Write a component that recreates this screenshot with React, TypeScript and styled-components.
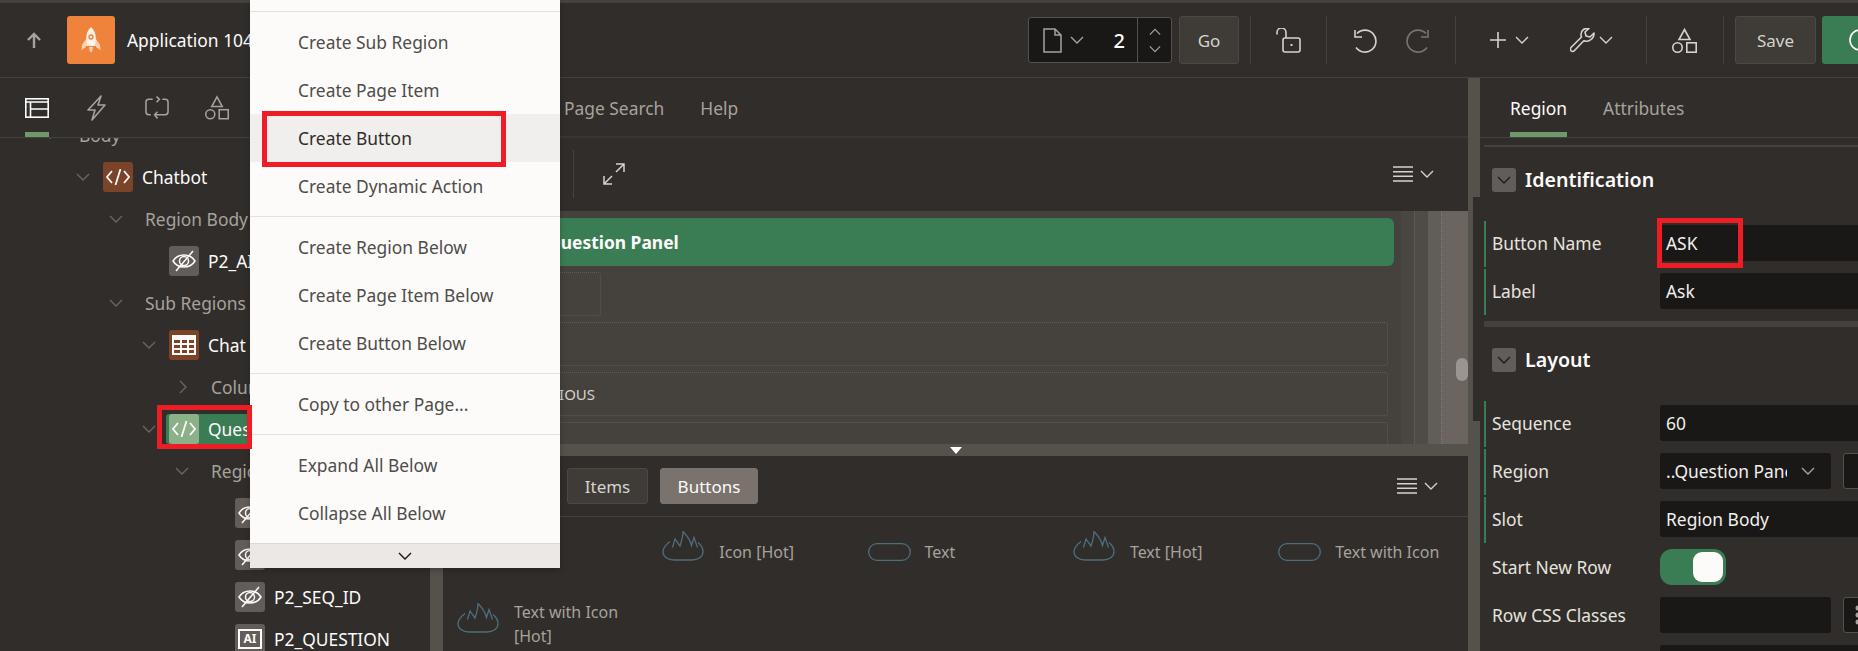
import React from "react";
import styled, { createGlobalStyle } from "styled-components";

const GlobalStyle = createGlobalStyle`
  html, body {
    margin: 0;
    padding: 0;
    background: #312d2a;
  }
  * {
    box-sizing: border-box;
  }
`;

const Page = styled.div`
  position: relative;
  width: 1858px;
  height: 651px;
  overflow: hidden;
  background: #312d2a;
  color: #fcfbfa;
  font-family: "Noto Sans", "Open Sans", sans-serif;
  font-size: 17.4px;
`;

const TopStrip = styled.div`
  height: 3px;
  background: #45413c;
`;

/* header */
const Header = styled.header`
  height: 75px;
  display: flex;
  align-items: center;
  border-bottom: 1px solid #45413c;
`;

const AppBlock = styled.div`
  width: 1028px;
  flex: none;
  display: flex;
  align-items: center;
  padding-left: 25px;
`;

const UpButton = styled.span`
  width: 18px;
  height: 18px;
  margin-right: 24px;
  color: #a6a29c;
  display: flex;
`;

const AppIcon = styled.span`
  width: 48px;
  height: 48px;
  margin-right: 12px;
  border-radius: 3px;
  background: #ef833b;
  display: flex;
  align-items: center;
  justify-content: center;
`;

const AppTitle = styled.span`
  font-size: 17.4px;
  white-space: nowrap;
`;

const Tools = styled.div`
  display: flex;
  align-items: center;
  flex: none;
`;

const PageBox = styled.div`
  width: 144px;
  height: 46px;
  display: flex;
  align-items: center;
  background: #191817;
  border: 1px solid #55514b;
  border-radius: 3px;
`;

const PageType = styled.div`
  width: 108px;
  height: 100%;
  display: flex;
  align-items: center;
  padding-left: 14px;
  gap: 8px;
  color: #a6a29c;
`;

const PageNumber = styled.span`
  margin-left: auto;
  padding-right: 12px;
  font-size: 20px;
  font-weight: 500;
  color: #fff;
`;

const Stepper = styled.div`
  flex: 1;
  height: 100%;
  border-left: 1px solid #55514b;
  display: flex;
  flex-direction: column;
  align-items: center;
  justify-content: space-around;
  padding: 5px 0;
  color: #a6a29c;
`;

const HeaderButton = styled.button<{ $width: number }>`
  width: ${(p) => p.$width}px;
  height: 48px;
  flex: none;
  margin-left: ${(p) => (p.$width > 70 ? 11 : 7)}px;
  padding: 0;
  background: #3f3b37;
  border: 1px solid #4c4842;
  border-radius: 3px;
  color: #d6d2cd;
  font-family: inherit;
  font-size: 17px;
`;

const GreenButton = styled.div`
  width: 80px;
  height: 48px;
  flex: none;
  margin-left: 6px;
  padding-left: 26px;
  background: #3a7d55;
  border-radius: 3px 0 0 3px;
  display: flex;
  align-items: center;
`;

const ToolSep = styled.span<{ $left?: number }>`
  width: 1px;
  height: 48px;
  flex: none;
  background: #45413c;
  margin-left: ${(p) => p.$left ?? 0}px;
`;

const ToolGroup = styled.div<{ $width: number; $pad: number; $gap: number }>`
  width: ${(p) => p.$width}px;
  height: 48px;
  flex: none;
  display: flex;
  align-items: center;
  padding-left: ${(p) => p.$pad}px;
  gap: ${(p) => p.$gap}px;
  color: #d6d2cd;
`;

const ToolPair = styled.span<{ $gap: number }>`
  display: flex;
  align-items: center;
  gap: ${(p) => p.$gap}px;
`;

const Dim = styled.span`
  display: flex;
  color: #7a766f;
`;

/* main area */
const Workspace = styled.div`
  height: 573px;
  display: flex;
`;

const LeftPane = styled.div`
  width: 430px;
  flex: none;
  display: flex;
  flex-direction: column;
  overflow: hidden;
`;

const PaneTabs = styled.div`
  height: 60px;
  flex: none;
  display: flex;
  align-items: center;
  gap: 36px;
  padding-left: 25px;
  color: #a6a29c;
  border-bottom: 1px solid #45413c;
`;

const PaneTab = styled.span<{ $active?: boolean }>`
  position: relative;
  width: 24px;
  height: 24px;
  display: flex;
  align-items: center;
  justify-content: center;
  color: ${(p) => (p.$active ? "#fff" : "#a6a29c")};

  &::after {
    content: "";
    display: ${(p) => (p.$active ? "block" : "none")};
    position: absolute;
    left: 0;
    right: 0;
    top: 36px;
    height: 5px;
    background: #6e9a6b;
  }
`;

const Tree = styled.div`
  flex: 1;
  overflow: hidden;
`;

const TreeList = styled.div`
  margin-top: -24px;
`;

const TreeRow = styled.div<{ $left: number }>`
  position: relative;
  height: 42px;
  display: flex;
  align-items: center;
  padding-left: ${(p) => p.$left}px;
`;

const Caret = styled.span<{ $gap: number }>`
  width: 16px;
  flex: none;
  margin-right: ${(p) => p.$gap}px;
  display: flex;
  justify-content: center;
  color: #6b6760;
`;

const TreeNode = styled.div<{ $selected?: boolean }>`
  flex: 1;
  height: 30px;
  display: flex;
  align-items: center;
  gap: 9px;
  white-space: nowrap;
  ${(p) =>
    p.$selected &&
    `
    margin-left: -3px;
    padding-left: 3px;
    background: #3a7d55;
    border-radius: 3px 0 0 3px;
  `}
`;

const NodeIcon = styled.span<{ $tone: "brown" | "grey" | "light" }>`
  width: 30px;
  height: 30px;
  flex: none;
  border-radius: 3px;
  display: flex;
  align-items: center;
  justify-content: center;
  color: #fcfbfa;
  background: ${(p) =>
    p.$tone === "brown" ? "#7b4428" : p.$tone === "light" ? "#8cb088" : "#625d58"};
`;

const NodeText = styled.span<{ $dim?: boolean }>`
  font-size: 17.4px;
  color: ${(p) => (p.$dim ? "#a6a29c" : "#fcfbfa")};
  white-space: nowrap;
`;

const AiBadge = styled.span`
  width: 24px;
  height: 20px;
  border: 2px solid #fcfbfa;
  font-size: 12px;
  font-weight: 700;
  line-height: 16px;
  text-align: center;
`;

const Splitter = styled.div<{ $width: number }>`
  width: ${(p) => p.$width}px;
  flex: none;
  background: #55514b;
`;

const CenterPane = styled.div`
  flex: 1;
  min-width: 0;
  display: flex;
  flex-direction: column;
`;

const CenterTabs = styled.div`
  height: 60px;
  flex: none;
  display: flex;
  align-items: center;
  padding: 1px 0 0 121px;
  gap: 36px;
  color: #a6a29c;
  border-bottom: 2px solid #3a3733;
`;

const TextTab = styled.span<{ $active?: boolean }>`
  position: relative;
  color: ${(p) => (p.$active ? "#fcfbfa" : "#a6a29c")};
  font-size: 17.4px;
  white-space: nowrap;
`;

const CanvasBar = styled.div`
  height: 73px;
  flex: none;
  display: flex;
  align-items: center;
  padding: 0 0 2px 130px;
  color: #d6d2cd;
`;

const BarSep = styled.span`
  width: 1px;
  height: 48px;
  background: #45413c;
  margin-right: 29px;
`;

const RowMenu = styled.span<{ $right: number }>`
  margin-left: auto;
  margin-right: ${(p) => p.$right}px;
  display: flex;
  align-items: center;
  gap: 7px;
`;

const Canvas = styled.div`
  height: 233px;
  flex: none;
  display: flex;
  overflow: hidden;
`;

const CanvasMain = styled.div`
  flex: 1;
  min-width: 0;
  background: #45413c;
  padding: 7px 7px 0 8px;
`;

const RegionTitle = styled.div`
  height: 48px;
  padding-left: 96px;
  display: flex;
  align-items: center;
  background: #3a7d55;
  border-radius: 6px;
  font-size: 17.4px;
  font-weight: 700;
`;

const Slot = styled.div<{ $width?: number }>`
  width: ${(p) => (p.$width ? `${p.$width}px` : "auto")};
  height: 44px;
  margin: 6px 6px 6px 0;
  padding-left: 47px;
  display: flex;
  align-items: center;
  color: #d6d2cd;
  font-size: 15px;
  border: 1px dotted #5f5b55;
  border-radius: 3px;
`;

const Gutter = styled.div<{ $width: number; $color: string; $line?: string }>`
  width: ${(p) => p.$width}px;
  flex: none;
  background: ${(p) => p.$color};
  border-right: ${(p) => (p.$line ? `1px ${p.$line}` : "none")};
`;

const ScrollTrack = styled.div`
  width: 26px;
  flex: none;
  display: flex;
  justify-content: flex-end;
  background: #6c655f;
`;

const ScrollThumb = styled.div`
  width: 12px;
  height: 23px;
  margin-top: 147px;
  background: #9a9590;
  border-radius: 6px;
`;

const HSplit = styled.div`
  height: 12px;
  flex: none;
  background: #55514b;
  display: flex;
  justify-content: center;
  align-items: center;
`;

const SplitArrow = styled.span`
  width: 0;
  height: 0;
  border-left: 6px solid transparent;
  border-right: 6px solid transparent;
  border-top: 7px solid #fff;
`;

const GalleryBar = styled.div`
  height: 61px;
  flex: none;
  display: flex;
  align-items: center;
  padding-left: 124px;
  gap: 12px;
  border-bottom: 1px solid #45413c;
  color: #d6d2cd;
`;

const ModeButton = styled.span<{ $active?: boolean; $width: number }>`
  width: ${(p) => p.$width}px;
  height: 36px;
  display: flex;
  align-items: center;
  justify-content: center;
  border-radius: 3px;
  font-size: 17px;
  color: ${(p) => (p.$active ? "#fcfbfa" : "#d6d2cd")};
  background: ${(p) => (p.$active ? "#7a736d" : "#3f3b37")};
  border: 1px solid ${(p) => (p.$active ? "#7a736d" : "#4c4842")};
`;

const Gallery = styled.div`
  display: grid;
  grid-template-columns: repeat(5, 205.3px);
  grid-auto-rows: 48px;
  row-gap: 24px;
  padding: 11px 0 0 14px;
`;

const GalleryItem = styled.div`
  display: flex;
  align-items: center;
  gap: 14px;
  color: #a6a29c;
  font-size: 16px;
  line-height: 24px;
`;

const GalleryLabel = styled.span`
  max-width: 125px;
`;

const GalleryGlyph = styled.span<{ $hot: boolean }>`
  width: 43px;
  flex: none;
  margin-bottom: ${(p) => (p.$hot ? 12 : 0)}px;
  display: flex;
  color: #4d6e7d;
`;

/* property editor */
const RightPane = styled.div`
  position: relative;
  width: 378px;
  flex: none;
`;

const Notch = styled.div`
  position: absolute;
  left: -7px;
  top: 119px;
  width: 11px;
  height: 224px;
  background: #312d2a;
`;

const RightTabs = styled.div`
  height: 60px;
  display: flex;
  align-items: center;
  gap: 36px;
  padding: 1px 0 0 30px;
  border-bottom: 1px solid #45413c;
`;

const TabMark = styled.span`
  position: absolute;
  left: 0;
  right: 0;
  top: 36px;
  height: 5px;
  background: #6e9a6b;
`;

const PropPanel = styled.div`
  overflow: hidden;
  height: 513px;
  padding-top: 7px;
  padding-left: 4px;
`;

const SectionBar = styled.div<{ $height: number; $top?: number }>`
  height: ${(p) => p.$height}px;
  margin-top: ${(p) => p.$top ?? 0}px;
  background: #45413c;
`;

const SectionHead = styled.div`
  height: 24px;
  margin: 21px 0 29px;
  padding-left: 8px;
  display: flex;
  align-items: center;
  gap: 9px;
  font-size: 19.6px;
  font-weight: 600;
`;

const SectionTitle = styled.span`
  margin-top: -2px;
`;

const SectionToggle = styled.span`
  width: 24px;
  height: 24px;
  border-radius: 3px;
  background: #625d58;
  display: flex;
  align-items: center;
  justify-content: center;
  color: #1e1c1a;
`;

const PropRow = styled.div<{ $marked?: boolean }>`
  height: 46px;
  margin-bottom: 2px;
  display: flex;
  align-items: center;
  padding: 0 0 2px 6px;
  border-left: 2px solid ${(p) => (p.$marked ? "#3a7d55" : "transparent")};
`;

const PropLabel = styled.span`
  width: 168px;
  flex: none;
  color: #e6e3df;
  font-size: 17.4px;
  white-space: nowrap;
`;

const Field = styled.div<{ $short?: boolean }>`
  position: relative;
  width: ${(p) => (p.$short ? 171 : 220)}px;
  height: 36px;
  flex: none;
  display: flex;
  align-items: center;
  padding-left: 6px;
  background: #191817;
  border-radius: 3px;
  font-size: 17.4px;
  color: #f1efed;
`;

const FieldText = styled.span`
  width: 121px;
  overflow: hidden;
  white-space: nowrap;
`;

const FieldCaret = styled.span`
  margin-left: 14px;
  display: flex;
  color: #a6a29c;
`;

const SideBox = styled.div`
  width: 40px;
  height: 36px;
  flex: none;
  margin-left: 12px;
  padding-left: 9px;
  display: flex;
  align-items: center;
  background: #191817;
  border: 1px solid #55514b;
  border-radius: 3px;
  color: #a6a29c;
`;

const Toggle = styled.div`
  width: 66px;
  height: 36px;
  padding: 3px;
  display: flex;
  justify-content: flex-end;
  background: #3a7d55;
  border-radius: 12px;
`;

const ToggleKnob = styled.span`
  width: 30px;
  height: 30px;
  background: #fcfbfa;
  border-radius: 9px;
`;

/* context menu */
const Menu = styled.div`
  position: absolute;
  left: 250px;
  top: 0;
  width: 310px;
  height: 568px;
  z-index: 10;
  padding-top: 11px;
  background: #fcfbfa;
  box-shadow: 0 2px 6px rgba(0, 0, 0, 0.25);
  color: #4f4c49;
  display: flex;
  flex-direction: column;
`;

const MenuGroup = styled.div`
  padding: 6px 0;
  border-top: 1px solid #e4e1de;
`;

const MenuItem = styled.div<{ $hot?: boolean }>`
  position: relative;
  height: 48px;
  display: flex;
  align-items: center;
  padding-left: 48px;
  font-size: 17.4px;
  color: ${(p) => (p.$hot ? "#312d2a" : "#4f4c49")};
  background: ${(p) => (p.$hot ? "#f1efed" : "transparent")};
`;

const MenuScroll = styled.div`
  height: 25px;
  margin-top: auto;
  display: flex;
  align-items: center;
  justify-content: center;
  background: #ebe8e5;
  border-top: 1px solid #dcd9d5;
  color: #161513;
`;

const RedBox = styled.div<{ $left: number; $top: number; $width: number; $height: number }>`
  position: absolute;
  left: ${(p) => p.$left}px;
  top: ${(p) => p.$top}px;
  width: ${(p) => p.$width}px;
  height: ${(p) => p.$height}px;
  border: 5px solid #ee1c25;
  z-index: 20;
  pointer-events: none;
`;

/* drawings */
type SvgProps = { size?: number };

const Chevron = ({ size = 14, dir = "down" }: SvgProps & { dir?: "down" | "up" | "right" }) => {
  const d = dir === "down" ? "M1 4l6 6 6-6" : dir === "up" ? "M1 10l6-6 6 6" : "M4 1l6 6-6 6";
  return (
    <svg width={size} height={size} viewBox="0 0 14 14" fill="none" stroke="currentColor" strokeWidth="1.4">
      <path d={d} />
    </svg>
  );
};

const ArrowUp = () => (
  <svg width="18" height="18" viewBox="0 0 18 18" fill="none" stroke="currentColor" strokeWidth="2.4">
    <path d="M9 17V3M3 9l6-6 6 6" />
  </svg>
);

const Rocket = () => (
  <svg width="20" height="26" viewBox="0 0 20 26">
    <path d="M10 0c3.400 3 4.800 7 4.800 11v8H5.200v-8C5.200 7 6.600 3 10 0z" fill="#fdf3ea" />
    <path d="M5 12L1 18l-.5 5L5 20zM15 12l4 6 .5 5-4.500-3z" fill="#f8cfae" />
    <path d="M8 20h4l-1 5H9z" fill="#f8cfae" />
    <circle cx="10" cy="10" r="2" fill="none" stroke="#ef833b" strokeWidth="1.400" />
  </svg>
);

const LayoutIcon = () => (
  <svg width="24" height="20" viewBox="0 0 24 20" fill="none" stroke="currentColor" strokeWidth="1.6">
    <rect x="0.8" y="0.8" width="22.400" height="18.400" />
    <path d="M1 4h22M5.500 4v15M5.500 11H23" />
  </svg>
);

const BoltIcon = () => (
  <svg width="20" height="26" viewBox="0 0 20 26" fill="none" stroke="currentColor" strokeWidth="1.600" strokeLinejoin="round">
    <path d="M14 1L1 15h7l-3 10 13-15h-7z" />
  </svg>
);

const LoopIcon = () => (
  <svg width="25" height="25" viewBox="0 0 25 25" fill="none" stroke="currentColor" strokeWidth="1.600">
    <path d="M8 4H4a3 3 0 0 0-3 3v10a3 3 0 0 0 3 3h2M12 1l3 3-3 3M15 4h0M17 20h4a3 3 0 0 0 3-3V7a3 3 0 0 0-3-3h-3M13 24l-3-4 3-3M10 20h7" />
  </svg>
);

const ShapesIcon = () => (
  <svg width="25" height="25" viewBox="0 0 25 25" fill="none" stroke="currentColor" strokeWidth="1.600">
    <path d="M12.500 1.500l5.500 10H7z" />
    <circle cx="5.500" cy="19.500" r="4.700" />
    <rect x="14.800" y="14.800" width="9.400" height="9.400" />
  </svg>
);

const DocIcon = () => (
  <svg width="19" height="25" viewBox="0 0 19 25" fill="none" stroke="currentColor" strokeWidth="1.500">
    <path d="M1 1h11l6 6v17H1zM12 1v6h6" />
  </svg>
);

const LockIcon = () => (
  <svg width="25" height="25" viewBox="0 0 25 25" fill="none" stroke="currentColor" strokeWidth="1.600">
    <path d="M1 6.500V4.500a4.500 4.500 0 0 1 9 0V10" />
    <rect x="7" y="10" width="17" height="14" rx="2" />
    <path d="M15.500 16v2" strokeWidth="2" />
  </svg>
);

const UndoIcon = ({ flip }: { flip?: boolean }) => (
  <svg width="25" height="25" viewBox="0 0 25 25" fill="none" stroke="currentColor" strokeWidth="1.600" style={flip ? { transform: "scaleX(-1)" } : undefined}>
    <path d="M4 4.500a11 11 0 1 1-1 14M2 1v7h7" transform="translate(1 1)" />
  </svg>
);

const PlusIcon = () => (
  <svg width="16" height="16" viewBox="0 0 16 16" fill="none" stroke="currentColor" strokeWidth="1.600">
    <path d="M8 0v16M0 8h16" />
  </svg>
);

const WrenchIcon = () => (
  <svg width="25" height="25" viewBox="0 0 25 25" fill="none" stroke="currentColor" strokeWidth="1.600" strokeLinejoin="round">
    <path d="M24 5l-4 4-4-1-1-4 4-3.500c-4-.8-8 1.500-8 6 0 1 .2 2 .5 2.500L1 19.500c-1 1-.6 2.500 0 3.300.8.800 2.300 1.200 3.300 0l9.500-10c4 1.500 10.500-1.500 10.200-7.800z" />
  </svg>
);

const ListIcon = () => (
  <svg width="20" height="16" viewBox="0 0 20 16" fill="none" stroke="currentColor" strokeWidth="1.600">
    <path d="M0 1h20M0 5.700h20M0 10.300h20M0 15h20" />
  </svg>
);

const ExpandIcon = () => (
  <svg width="22" height="22" viewBox="0 0 22 22" fill="none" stroke="currentColor" strokeWidth="1.500">
    <path d="M13 1h8v8M21 1l-8 8M9 21H1v-8M1 21l8-8" />
  </svg>
);

const CodeIcon = () => (
  <svg width="24" height="16" viewBox="0 0 24 16" fill="none" stroke="currentColor" strokeWidth="1.800">
    <path d="M6 2L1 8l5 6M18 2l5 6-5 6M14.500 0l-5 16" />
  </svg>
);

const HiddenIcon = () => (
  <svg width="24" height="22" viewBox="0 0 24 22" fill="none" stroke="currentColor" strokeWidth="1.500">
    <path d="M1 11c5-8 17-8 22 0-5 8-17 8-22 0z" />
    <circle cx="12" cy="11" r="4.500" />
    <path d="M4 21L21 1" />
  </svg>
);

const TableIcon = () => (
  <svg width="24" height="20" viewBox="0 0 24 20">
    <rect width="24" height="20" fill="currentColor" />
    <path d="M2 5h6v3H2zM10 5h5v3h-5zM17 5h5v3h-5zM2 10h6v3H2zM10 10h5v3h-5zM17 10h5v3h-5zM2 15h6v3H2zM10 15h5v3h-5zM17 15h5v3h-5z" fill="#7b4428" />
  </svg>
);

const Flame = () => (
  <svg width="43" height="30" viewBox="0 0 43 30" fill="none" stroke="currentColor" strokeWidth="1.300">
    <path d="M12 29h18c6 0 11-3 11-8.500 0-3.500-2-6.500-5-9M12 29C6 29 1 26 1 20.500 1 17 3.500 14 8 10.500" />
    <path d="M10.500 16.500L13 8l5 7c1.500-4.500 3-9.500 3-14.500 3 3 7 8 8.500 14L32 6.500l3.500 10" />
  </svg>
);

const Pill = () => (
  <svg width="43" height="18" viewBox="0 0 43 18" fill="none" stroke="currentColor" strokeWidth="1.300">
    <rect x="0.700" y="0.700" width="41.600" height="16.600" rx="8.300" />
  </svg>
);

const DotGrid = () => (
  <svg width="10" height="20" viewBox="0 0 10 20" fill="currentColor">
    <circle cx="5" cy="3" r="2.500" />
    <circle cx="5" cy="10" r="2.500" />
    <circle cx="5" cy="17" r="2.500" />
  </svg>
);

const ActionLoop = () => (
  <svg width="24" height="24" viewBox="0 0 24 24" fill="none" stroke="#fcfbfa" strokeWidth="1.600">
    <circle cx="12" cy="12" r="10" />
  </svg>
);

type TreeEntry = {
  left: number;
  caret?: "down" | "right";
  gap?: number;
  icon?: "code" | "hidden" | "table" | "ai";
  text: string;
  dim?: boolean;
  selected?: boolean;
};

const treeEntries: TreeEntry[] = [
  { left: 42, caret: "down", gap: 21, text: "Body", dim: true },
  { left: 75, caret: "down", gap: 12, icon: "code", text: "Chatbot" },
  { left: 108, caret: "down", gap: 21, text: "Region Body", dim: true },
  { left: 169, icon: "hidden", text: "P2_AI_MODEL" },
  { left: 108, caret: "down", gap: 21, text: "Sub Regions", dim: true },
  { left: 141, caret: "down", gap: 12, icon: "table", text: "Chat History" },
  { left: 175, caret: "right", gap: 20, text: "Columns", dim: true },
  { left: 141, caret: "down", gap: 12, icon: "code", text: "Question Panel", selected: true },
  { left: 174, caret: "down", gap: 21, text: "Region Body", dim: true },
  { left: 235, icon: "hidden", text: "P2_CONV_ID" },
  { left: 235, icon: "hidden", text: "P2_PREVIOUS" },
  { left: 235, icon: "hidden", text: "P2_SEQ_ID" },
  { left: 235, icon: "ai", text: "P2_QUESTION" },
];

const nodeGlyph = (icon: TreeEntry["icon"]) => {
  if (icon === "code") return <CodeIcon />;
  if (icon === "hidden") return <HiddenIcon />;
  if (icon === "table") return <TableIcon />;
  return <AiBadge>AI</AiBadge>;
};

const menuGroups = [
  ["Create Sub Region", "Create Page Item", "Create Button", "Create Dynamic Action"],
  ["Create Region Below", "Create Page Item Below", "Create Button Below"],
  ["Copy to other Page..."],
  ["Expand All Below", "Collapse All Below"],
];

const galleryItems = [
  { glyph: "pill", label: "Icon" },
  { glyph: "flame", label: "Icon [Hot]" },
  { glyph: "pill", label: "Text" },
  { glyph: "flame", label: "Text [Hot]" },
  { glyph: "pill", label: "Text with Icon" },
  { glyph: "flame", label: "Text with Icon [Hot]" },
];

export default function App() {
  return (
    <Page>
      <GlobalStyle />
      <TopStrip />
      <Header>
        <AppBlock>
          <UpButton>
            <ArrowUp />
          </UpButton>
          <AppIcon>
            <Rocket />
          </AppIcon>
          <AppTitle>Application 104</AppTitle>
        </AppBlock>
        <Tools>
          <PageBox>
            <PageType>
              <DocIcon />
              <Chevron />
              <PageNumber>2</PageNumber>
            </PageType>
            <Stepper>
              <Chevron size={12} dir="up" />
              <Chevron size={12} />
            </Stepper>
          </PageBox>
          <HeaderButton $width={60}>Go</HeaderButton>
          <ToolSep $left={11} />
          <ToolGroup $width={75} $pad={25} $gap={0}>
            <LockIcon />
          </ToolGroup>
          <ToolSep />
          <ToolGroup $width={128} $pad={25} $gap={29}>
            <UndoIcon />
            <Dim>
              <UndoIcon flip />
            </Dim>
          </ToolGroup>
          <ToolSep />
          <ToolGroup $width={190} $pad={34} $gap={41}>
            <ToolPair $gap={9}>
              <PlusIcon />
              <Chevron />
            </ToolPair>
            <ToolPair $gap={4}>
              <WrenchIcon />
              <Chevron />
            </ToolPair>
          </ToolGroup>
          <ToolSep />
          <ToolGroup $width={76} $pad={25} $gap={0}>
            <ShapesIcon />
          </ToolGroup>
          <ToolSep />
          <HeaderButton $width={81}>Save</HeaderButton>
          <GreenButton>
            <ActionLoop />
          </GreenButton>
        </Tools>
      </Header>

      <Workspace>
        <LeftPane>
          <PaneTabs>
            <PaneTab $active>
              <LayoutIcon />
            </PaneTab>
            <PaneTab>
              <BoltIcon />
            </PaneTab>
            <PaneTab>
              <LoopIcon />
            </PaneTab>
            <PaneTab>
              <ShapesIcon />
            </PaneTab>
          </PaneTabs>
          <Tree>
            <TreeList>
              {treeEntries.map((entry, i) => (
                <TreeRow key={i} $left={entry.left}>
                  {entry.caret && (
                    <Caret $gap={entry.gap ?? 12}>
                      <Chevron size={14} dir={entry.caret} />
                    </Caret>
                  )}
                  <TreeNode $selected={entry.selected}>
                    {entry.icon && (
                      <NodeIcon $tone={entry.selected ? "light" : entry.icon === "code" || entry.icon === "table" ? "brown" : "grey"}>
                        {nodeGlyph(entry.icon)}
                      </NodeIcon>
                    )}
                    <NodeText $dim={entry.dim}>{entry.text}</NodeText>
                  </TreeNode>
                  {entry.selected && <RedBox $left={157} $top={-3} $width={95} $height={44} />}
                </TreeRow>
              ))}
            </TreeList>
          </Tree>
        </LeftPane>
        <Splitter $width={13} />

        <CenterPane>
          <CenterTabs>
            <TextTab>Page Search</TextTab>
            <TextTab>Help</TextTab>
          </CenterTabs>
          <CanvasBar>
            <BarSep />
            <ExpandIcon />
            <RowMenu $right={34}>
              <ListIcon />
              <Chevron />
            </RowMenu>
          </CanvasBar>
          <Canvas>
            <CanvasMain>
              <RegionTitle>Question Panel</RegionTitle>
              <Slot $width={150} />
              <Slot />
              <Slot>P2_PREVIOUS</Slot>
              <Slot />
            </CanvasMain>
            <Gutter $width={14} $color="#4a4641" $line="solid #5c5852" />
            <Gutter $width={13} $color="#4f4b46" />
            <Gutter $width={14} $color="#625d58" $line="dotted #85807a" />
            <ScrollTrack>
              <ScrollThumb />
            </ScrollTrack>
          </Canvas>
          <HSplit>
            <SplitArrow />
          </HSplit>
          <GalleryBar>
            <ModeButton $width={81}>Items</ModeButton>
            <ModeButton $width={98} $active>
              Buttons
            </ModeButton>
            <RowMenu $right={30}>
              <ListIcon />
              <Chevron />
            </RowMenu>
          </GalleryBar>
          <Gallery>
            {galleryItems.map((item) => (
              <GalleryItem key={item.label}>
                <GalleryGlyph $hot={item.glyph === "flame"}>{item.glyph === "flame" ? <Flame /> : <Pill />}</GalleryGlyph>
                <GalleryLabel>{item.label}</GalleryLabel>
              </GalleryItem>
            ))}
          </Gallery>
        </CenterPane>
        <Splitter $width={12} />

        <RightPane>
          <Notch />
          <RightTabs>
            <TextTab $active>
              Region
              <TabMark />
            </TextTab>
            <TextTab>Attributes</TextTab>
          </RightTabs>
          <PropPanel>
            <SectionBar $height={2} />
            <SectionHead>
              <SectionToggle>
                <Chevron />
              </SectionToggle>
              <SectionTitle>Identification</SectionTitle>
            </SectionHead>
            <PropRow $marked>
              <PropLabel>Button Name</PropLabel>
              <Field>
                ASK
                <RedBox $left={-3} $top={-7} $width={86} $height={50} />
              </Field>
            </PropRow>
            <PropRow $marked>
              <PropLabel>Label</PropLabel>
              <Field>Ask</Field>
            </PropRow>
            <SectionBar $height={6} $top={6} />
            <SectionHead>
              <SectionToggle>
                <Chevron />
              </SectionToggle>
              <SectionTitle>Layout</SectionTitle>
            </SectionHead>
            <PropRow $marked>
              <PropLabel>Sequence</PropLabel>
              <Field>60</Field>
            </PropRow>
            <PropRow $marked>
              <PropLabel>Region</PropLabel>
              <Field $short>
                <FieldText>..Question Panel</FieldText>
                <FieldCaret>
                  <Chevron />
                </FieldCaret>
              </Field>
              <SideBox />
            </PropRow>
            <PropRow $marked>
              <PropLabel>Slot</PropLabel>
              <Field>Region Body</Field>
            </PropRow>
            <PropRow>
              <PropLabel>Start New Row</PropLabel>
              <Toggle>
                <ToggleKnob />
              </Toggle>
            </PropRow>
            <PropRow>
              <PropLabel>Row CSS Classes</PropLabel>
              <Field $short />
              <SideBox>
                <DotGrid />
              </SideBox>
            </PropRow>
            <PropRow>
              <PropLabel />
              <Field />
            </PropRow>
          </PropPanel>
        </RightPane>
      </Workspace>

      <Menu>
        {menuGroups.map((group) => (
          <MenuGroup key={group[0]}>
            {group.map((label) => (
              <MenuItem key={label} $hot={label === "Create Button"}>
                {label}
                {label === "Create Button" && <RedBox $left={12} $top={-3} $width={244} $height={56} />}
              </MenuItem>
            ))}
          </MenuGroup>
        ))}
        <MenuScroll>
          <Chevron />
        </MenuScroll>
      </Menu>
    </Page>
  );
}
